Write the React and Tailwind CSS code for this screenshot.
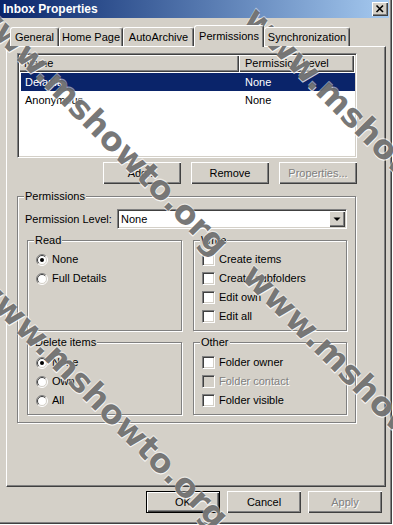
const raised = "shadow-[inset_1px_1px_0_#ffffff,inset_-1px_-1px_0_#404040,inset_-2px_-2px_0_#808080]";
const sunken = "border border-t-[#808080] border-l-[#808080] border-r-white border-b-white shadow-[inset_1px_1px_0_#404040,inset_-1px_-1px_0_#d4d0c8]";
const etched = "border border-[#808080] shadow-[inset_1px_1px_0_#ffffff,1px_1px_0_#ffffff]";
const disabledText = "text-[#808080] [text-shadow:1px_1px_0_#ffffff]";
const mark = "pointer-events-none absolute origin-top-left rotate-45 whitespace-nowrap font-['DejaVu_Sans',Verdana,sans-serif] font-bold text-[33px] leading-[33px] text-[#5f5f5f]/85 [text-shadow:1px_1px_0_rgba(255,255,255,0.8),-1px_-1px_0_rgba(255,255,255,0.5)]";

function Radio({ checked }) {
  return (
    <svg width="12" height="12" viewBox="0 0 12 12" className="shrink-0">
      <circle cx="6" cy="6" r="5" fill="#ffffff" />
      <path d="M9.9 2.1 A5.5 5.5 0 0 0 2.1 9.9" stroke="#808080" fill="none" />
      <path d="M9.2 2.8 A4.5 4.5 0 0 0 2.8 9.2" stroke="#404040" fill="none" />
      <path d="M9.9 2.1 A5.5 5.5 0 0 1 2.1 9.9" stroke="#ffffff" fill="none" />
      <path d="M9.2 2.8 A4.5 4.5 0 0 1 2.8 9.2" stroke="#d4d0c8" fill="none" />
      {checked && <circle cx="6" cy="6" r="2" fill="#000000" />}
    </svg>
  );
}

function Check({ disabled }) {
  return <div className={`w-[13px] h-[13px] shrink-0 ${sunken} ${disabled ? "bg-[#d4d0c8]" : "bg-white"}`} />;
}

function Group({ label, className, children }) {
  return (
    <div className={`relative ${etched} ${className}`}>
      <span className="absolute -top-[7px] left-[6px] px-[1px] bg-[#d4d0c8]">{label}</span>
      {children}
    </div>
  );
}

function RadioRow({ label, checked }) {
  return (
    <div className="flex items-center h-[19px] gap-[4px]">
      <Radio checked={checked} />
      <span>{label}</span>
    </div>
  );
}

function CheckRow({ label, disabled }) {
  return (
    <div className="flex items-center h-[19px] gap-[4px]">
      <Check disabled={disabled} />
      <span className={disabled ? disabledText : ""}>{label}</span>
    </div>
  );
}

function Tab({ label, className }) {
  return (
    <div className={`h-[19px] mb-[1px] flex items-center justify-center bg-[#d4d0c8] border-t border-l border-r border-t-white border-l-white border-r-[#404040] rounded-t-[3px] shadow-[inset_-1px_0_0_#808080] ${className}`}>
      {label}
    </div>
  );
}

export default function App() {
  return (
    <div className="relative w-[393px] h-[525px] overflow-hidden bg-white font-['Tahoma','Liberation_Sans',Arial,sans-serif] text-[11px] leading-[13px] text-black">
      <div className="flex flex-col w-[392px] h-[524px] bg-[#d4d0c8] border-r border-b border-[#404040] shadow-[inset_-1px_-1px_0_#808080]">
        {/* title bar */}
        <div className="flex h-[18px] mr-[2px] items-center pl-[3px] pr-[1px] bg-linear-to-r from-[#0a246a] to-[#a6caf0]">
          <span className="text-white font-bold text-[12px] leading-[14px]">Inbox Properties</span>
          <div className={`ml-auto w-[16px] h-[14px] bg-[#d4d0c8] ${raised} flex items-center justify-center`}>
            <svg width="16" height="14" viewBox="0 0 16 14">
              <path d="M4.5 3.5 L11 10 M11 3.5 L4.5 10" stroke="#000000" strokeWidth="1.6" />
            </svg>
          </div>
        </div>

        {/* tabs */}
        <div className="relative z-10 flex items-end h-[22px] -mb-[1px] mt-[7px] pl-[10px]">
          <Tab label="General" className="w-[49px]" />
          <Tab label="Home Page" className="w-[64px]" />
          <Tab label="AutoArchive" className="w-[71px]" />
          <div className="w-[70px] h-[22px] flex items-start justify-center pt-[4px] bg-[#d4d0c8] border-t border-l border-r border-t-white border-l-white border-r-[#404040] rounded-t-[3px] shadow-[inset_-1px_0_0_#808080]">
            Permissions
          </div>
          <Tab label="Synchronization" className="w-[86px]" />
        </div>

        {/* tab panel */}
        <div className="ml-[6px] w-[380px] h-[441px] flex flex-col border border-t-white border-l-white border-r-[#404040] border-b-[#404040] shadow-[inset_-1px_-1px_0_#808080]">
          <div className={`ml-[10px] mt-[6px] w-[340px] h-[105px] p-[1px] bg-white flex flex-col ${sunken}`}>
            <div className="flex h-[17px]">
              <div className={`w-[220px] pl-[5px] flex items-center bg-[#d4d0c8] ${raised}`}>Name</div>
              <div className={`w-[115px] pl-[6px] flex items-center bg-[#d4d0c8] ${raised}`}>Permission Level</div>
            </div>
            <div className="flex h-[18px] mt-[1px] ml-[2px] items-center bg-[#0a246a] text-white">
              <span className="w-[218px] pl-[4px]">Default</span>
              <span className="pl-[6px]">None</span>
            </div>
            <div className="flex h-[18px] ml-[2px] items-center">
              <span className="w-[218px] pl-[4px]">Anonymous</span>
              <span className="pl-[6px]">None</span>
            </div>
          </div>

          <div className="ml-[10px] w-[340px] mt-[4px] flex justify-end gap-[10px]">
            <div className={`w-[78px] h-[22px] flex items-center justify-center ${raised}`}>Add...</div>
            <div className={`w-[78px] h-[22px] flex items-center justify-center ${raised}`}>Remove</div>
            <div className={`w-[78px] h-[22px] flex items-center justify-center ${raised} ${disabledText}`}>Properties...</div>
          </div>

          <Group label="Permissions" className="ml-[10px] mt-[12px] w-[339px] h-[227px]">
            <div className="flex items-center mt-[12px] pl-[7px] h-[20px]">
              <span className="w-[92px]">Permission Level:</span>
              <div className={`w-[230px] h-[20px] bg-white flex items-center ${sunken}`}>
                <span className="pl-[3px]">None</span>
                <div className={`ml-auto mr-[1px] w-[16px] h-[16px] bg-[#d4d0c8] ${raised} flex items-center justify-center`}>
                  <svg width="16" height="16" viewBox="0 0 16 16">
                    <polygon points="4.5,6.5 11.5,6.5 8,10" fill="#000000" />
                  </svg>
                </div>
              </div>
            </div>
            <div className="flex gap-[11px] mt-[11px] ml-[9px]">
              <Group label="Read" className="w-[155px] h-[91px] pt-[9px] pl-[8px]">
                <RadioRow label="None" checked />
                <RadioRow label="Full Details" />
              </Group>
              <Group label="Write" className="w-[154px] h-[91px] pt-[9px] pl-[8px]">
                <CheckRow label="Create items" />
                <CheckRow label="Create subfolders" />
                <CheckRow label="Edit own" />
                <CheckRow label="Edit all" />
              </Group>
            </div>
            <div className="flex gap-[11px] mt-[11px] ml-[9px]">
              <Group label="Delete items" className="w-[155px] h-[73px] pt-[10px] pl-[8px]">
                <RadioRow label="None" checked />
                <RadioRow label="Own" />
                <RadioRow label="All" />
              </Group>
              <Group label="Other" className="w-[154px] h-[73px] pt-[10px] pl-[8px]">
                <CheckRow label="Folder owner" />
                <CheckRow label="Folder contact" disabled />
                <CheckRow label="Folder visible" />
              </Group>
            </div>
          </Group>
        </div>

        {/* dialog buttons */}
        <div className="flex mt-[4px] ml-[146px] gap-[7px]">
          <div className="w-[74px] h-[22px] flex items-center justify-center border border-black shadow-[inset_1px_1px_0_#ffffff,inset_-1px_-1px_0_#404040,inset_-2px_-2px_0_#808080]">OK</div>
          <div className={`w-[74px] h-[22px] flex items-center justify-center ${raised}`}>Cancel</div>
          <div className={`w-[74px] h-[22px] flex items-center justify-center ${raised} ${disabledText}`}>Apply</div>
        </div>
      </div>

      {/* watermark */}
      <span className={`${mark} -left-[10px] -top-[7px]`}>www.mshowto.org</span>
      <span className={`${mark} left-[262px] top-[1px]`}>www.mshowto.org</span>
      <span className={`${mark} -left-[10px] top-[266px]`}>www.mshowto.org</span>
      <span className={`${mark} left-[260px] top-[258px]`}>www.mshowto.org</span>
    </div>
  );
}
